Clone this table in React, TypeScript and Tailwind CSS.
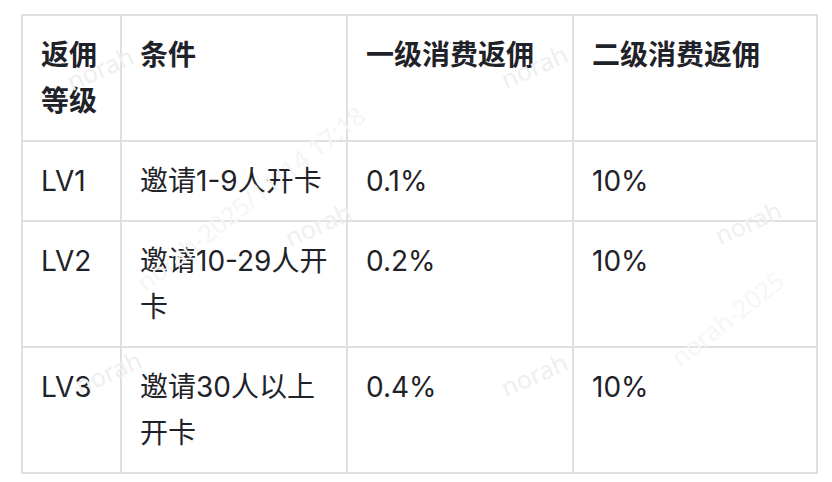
import React from "react";

const rows = [
  { level: "LV1", cond: "邀请1-9人开卡", first: "0.1%", second: "10%" },
  { level: "LV2", cond: "邀请10-29人开卡", first: "0.2%", second: "10%" },
  { level: "LV3", cond: "邀请30人以上开卡", first: "0.4%", second: "10%" },
];

// faint "norah" watermarks laid over the table
const marks = [
  { left: 65, top: 50 },
  { left: 499, top: 48 },
  { left: 713, top: 204 },
  { left: 283, top: 206 },
  { left: 73, top: 354 },
  { left: 499, top: 356 },
];

export default function App() {
  const cell = "border-2 border-[#dee0e3] px-[18px] py-[16px] align-top text-left";
  return (
    <div
      className="relative w-[832px] h-[482px] bg-white overflow-hidden text-[#1f2329]"
      style={{ fontFamily: '"Inter", "Noto Sans CJK SC", sans-serif' }}
    >
      <div className="pt-[14px] pl-[21px]">
        <table className="table-fixed border-collapse w-[795px] text-[28px] leading-[46px]">
          <colgroup>
            <col className="w-[99px]" />
            <col className="w-[226px]" />
            <col className="w-[226px]" />
            <col className="w-[244px]" />
          </colgroup>
          <thead>
            <tr>
              <th className={cell + " font-semibold"}>返佣等级</th>
              <th className={cell + " font-semibold"}>条件</th>
              <th className={cell + " font-semibold"}>一级消费返佣</th>
              <th className={cell + " font-semibold"}>二级消费返佣</th>
            </tr>
          </thead>
          <tbody>
            {rows.map((r) => (
              <tr key={r.level}>
                <td className={cell}>{r.level}</td>
                <td className={cell}>{r.cond}</td>
                <td className={cell}>{r.first}</td>
                <td className={cell}>{r.second}</td>
              </tr>
            ))}
          </tbody>
        </table>
      </div>

      {marks.map((m, i) => (
        <div
          key={i}
          className="absolute pointer-events-none select-none text-[25px] leading-[36px] text-[#efefef] -rotate-[24deg]"
          style={{ left: m.left, top: m.top, fontFamily: '"Noto Sans", sans-serif' }}
        >
          norah
        </div>
      ))}
      <div
        className="absolute pointer-events-none select-none whitespace-nowrap text-[25px] text-[#f5f5f5] -rotate-[38deg]"
        style={{ left: 110, top: 180, fontFamily: '"Noto Sans", sans-serif' }}
      >
        norah-2025/11/14 17:18
      </div>
      <div
        className="absolute pointer-events-none select-none whitespace-nowrap text-[25px] text-[#f6f6f6] -rotate-[38deg]"
        style={{ left: 660, top: 300, fontFamily: '"Noto Sans", sans-serif' }}
      >
        norah-2025
      </div>
    </div>
  );
}
